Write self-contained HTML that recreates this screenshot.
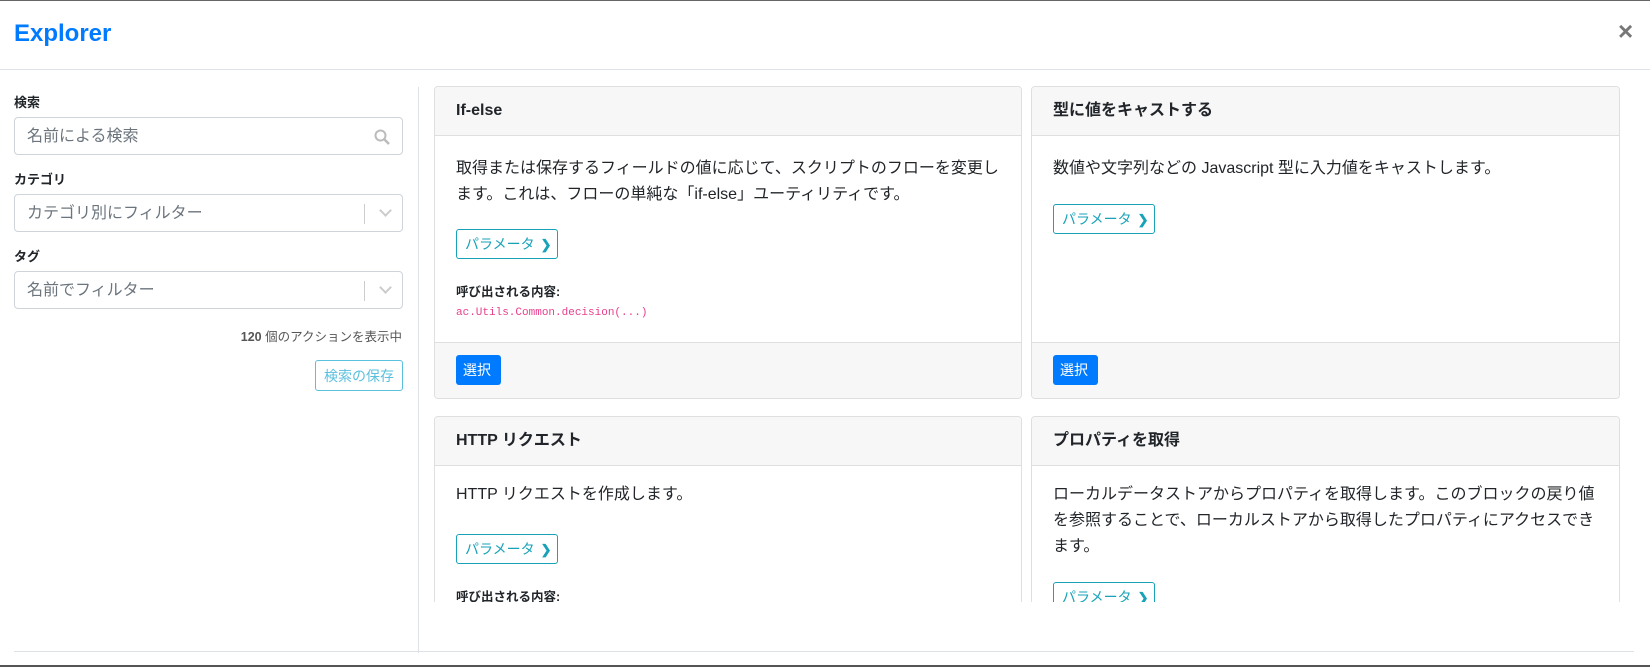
<!DOCTYPE html>
<html style="overflow:hidden"><head><meta charset="utf-8"><style>
*{box-sizing:border-box;margin:0;padding:0}
body{width:1650px;height:667px;overflow:hidden;background:#fff;font-family:"Liberation Sans","Noto Sans CJK JP",sans-serif;color:#212529;position:relative;box-shadow:inset 0 1px 0 #666,inset 0 -2px 0 #555}
.a{position:absolute}
.t{white-space:nowrap}
h1{position:absolute;left:14px;top:20px;font-size:24px;line-height:28px;font-weight:600;color:#007bff}
.close{left:1618px;top:16px;font-size:26px;line-height:30px;font-weight:700;color:#777}
.lbl{font-size:13px;font-weight:700;left:14px}
.inp{left:14px;width:389px;height:38px;border:1px solid #ced4da;border-radius:4px;font-size:16px;color:#6c757d;padding:9px 12px 0;line-height:20px;white-space:nowrap}
.sep{position:absolute;right:37px;top:9px;width:1px;height:20px;background:#ccc}
.chev{position:absolute;right:12px;top:11px;width:9px;height:9px;border-right:2px solid #ccc;border-bottom:2px solid #ccc;transform:rotate(45deg)}
.card{position:absolute;border:1px solid #dfdfdf;border-radius:4px;background:#fff;overflow:hidden}
.hd{position:absolute;left:0;right:0;top:0;height:49px;background:#f7f7f7;border-bottom:1px solid #dfdfdf;font-size:16px;line-height:20px;font-weight:700;padding:14px 21px;white-space:nowrap}
.ft{position:absolute;left:0;right:0;bottom:0;height:56px;background:#f7f7f7;border-top:1px solid #dfdfdf}
.desc{font-size:16px;line-height:26px;left:21px;white-space:nowrap}
.pb{position:absolute;left:21px;width:102px;height:30px;border:1px solid #17a2b8;border-radius:3px;color:#17a2b8;font-size:14px;line-height:18px;padding:5px 8px;white-space:nowrap}
.pb b{font-size:13px;margin-left:6px}
.sel{position:absolute;left:21px;top:12px;width:45px;height:30px;background:#007bff;color:#fff;border-radius:3px;font-size:14px;line-height:18px;padding:6px 7px}
.call{left:21px;font-size:12.5px;font-weight:700;line-height:16px}
.code{left:21px;font-family:"Liberation Mono",monospace;font-size:11px;color:#e83e8c;line-height:14px}
</style></head><body>
<h1>Explorer</h1>
<div class="a close">×</div>
<div class="a" style="left:0;right:0;top:69px;height:1px;background:#dee2e6"></div>
<div class="a lbl" style="top:92px">検索</div>
<div class="a inp" style="top:117px">名前による検索
<svg style="position:absolute;right:12px;top:11px" width="16" height="16" viewBox="0 0 16 16"><circle cx="6.5" cy="6.5" r="5" fill="none" stroke="#bbb" stroke-width="2"/><line x1="10.5" y1="10.5" x2="15" y2="15" stroke="#bbb" stroke-width="2.5"/></svg></div>
<div class="a lbl" style="top:169px">カテゴリ</div>
<div class="a inp" style="top:194px">カテゴリ別にフィルター<div class="sep"></div><div class="chev"></div></div>
<div class="a lbl" style="top:246px">タグ</div>
<div class="a inp" style="top:271px">名前でフィルター<div class="sep"></div><div class="chev"></div></div>
<div class="a t" style="right:1248px;top:326px;font-size:12.5px;color:#555"><b>120</b> 個のアクションを表示中</div>
<div class="a t" style="left:315px;top:360px;width:88px;height:31px;border:1px solid #5bc0de;border-radius:3px;color:#5bc0de;font-size:14px;line-height:18px;padding:6px 8px">検索の保存</div>
<div class="a" style="left:418px;top:87px;width:1px;height:566px;background:#dee2e6"></div>

<div class="a" style="left:434px;top:86px;width:1200px;height:516px;overflow:hidden">
<div class="card" style="left:0;top:0;width:588px;height:313px">
<div class="hd">If-else</div>
<div class="a desc" style="top:69px">取得または保存するフィールドの値に応じて、スクリプトのフローを変更し<br>ます。これは、フローの単純な「if-else」ユーティリティです。</div>
<div class="pb" style="top:142px">パラメータ<b>❯</b></div>
<div class="a call" style="top:197px">呼び出される内容:</div>
<div class="a code" style="top:219px">ac.Utils.Common.decision(...)</div>
<div class="ft"><div class="sel">選択</div></div>
</div>
<div class="card" style="left:597px;top:0;width:589px;height:313px">
<div class="hd">型に値をキャストする</div>
<div class="a desc" style="top:69px">数値や文字列などの Javascript 型に入力値をキャストします。</div>
<div class="pb" style="top:117px">パラメータ<b>❯</b></div>
<div class="ft"><div class="sel">選択</div></div>
</div>
<div class="card" style="left:0;top:330px;width:588px;height:300px">
<div class="hd">HTTP リクエスト</div>
<div class="a desc" style="top:65px">HTTP リクエストを作成します。</div>
<div class="pb" style="top:117px">パラメータ<b>❯</b></div>
<div class="a call" style="top:172px">呼び出される内容:</div>
</div>
<div class="card" style="left:597px;top:330px;width:589px;height:300px">
<div class="hd">プロパティを取得</div>
<div class="a desc" style="top:65px">ローカルデータストアからプロパティを取得します。このブロックの戻り値<br>を参照することで、ローカルストアから取得したプロパティにアクセスでき<br>ます。</div>
<div class="pb" style="top:165px">パラメータ<b>❯</b></div>
</div>
</div>
<div class="a" style="left:14px;width:1620px;top:651px;height:1px;background:#dee2e6"></div>
</body></html>
